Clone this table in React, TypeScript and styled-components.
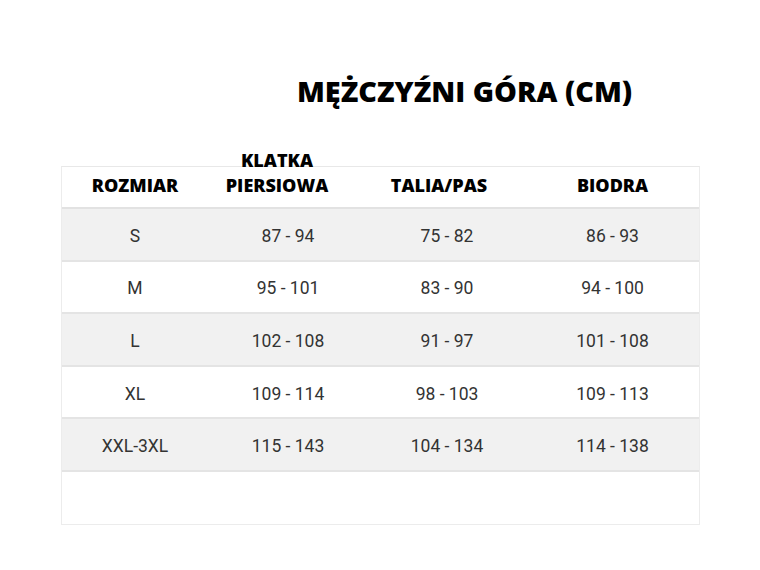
import styled, { createGlobalStyle } from "styled-components";

const GlobalStyle = createGlobalStyle`
  html, body {
    margin: 0;
    padding: 0;
    background: #ffffff;
  }
`;

const columns = [
  { label: "ROZMIAR", shift: 0 },
  { label: "KLATKA PIERSIOWA", shift: -11 },
  { label: "TALIA/PAS", shift: -8 },
  { label: "BIODRA", shift: 0 },
];

const rows = [
  ["S", "87 - 94", "75 - 82", "86 - 93"],
  ["M", "95 - 101", "83 - 90", "94 - 100"],
  ["L", "102 - 108", "91 - 97", "101 - 108"],
  ["XL", "109 - 114", "98 - 103", "109 - 113"],
  ["XXL-3XL", "115 - 143", "104 - 134", "114 - 138"],
];

export default function App() {
  return (
    <>
      <GlobalStyle />
      <Page>
        <Title>MĘŻCZYŹNI GÓRA (CM)</Title>
        <Table>
          <HeadRow>
            {columns.map((c) => (
              <HeadCell key={c.label} $shift={c.shift}>
                <HeadText>{c.label}</HeadText>
              </HeadCell>
            ))}
          </HeadRow>
          {rows.map((r, i) => (
            <Row key={r[0]} $shaded={i % 2 === 0}>
              {r.map((v, j) => (
                <Cell key={j}>{v}</Cell>
              ))}
            </Row>
          ))}
          <Row $shaded={false} />
        </Table>
      </Page>
    </>
  );
}

const Page = styled.div`
  width: 760px;
  height: 570px;
  padding-top: 71px;
  box-sizing: border-box;
`;

const Title = styled.h1`
  margin: 0 0 0 297px;
  font-family: "Open Sans", sans-serif;
  font-weight: 800;
  font-size: 28.8px;
  line-height: 40px;
  color: #000;
`;

const grid = `
  display: grid;
  grid-template-columns: 146px 160px 158px 1fr;
`;

const Table = styled.div`
  margin: 55px 0 0 61px;
  width: 639px;
  border: 1px solid #ececec;
  border-top-color: #e8e8e8;
  box-sizing: border-box;
`;

const HeadRow = styled.div`
  ${grid}
  grid-template-rows: 40px;
  height: 40px;
  background: #fff;
  border-bottom: 2px solid #e2e2e2;
`;

const HeadCell = styled.div<{ $shift: number }>`
  display: flex;
  align-items: flex-end;
  justify-content: center;
  min-height: 0;
  padding-bottom: 9px;
  box-sizing: border-box;
  transform: translateX(${(p) => p.$shift}px);
`;

const HeadText = styled.div`
  flex-shrink: 0;
  font-family: "Open Sans", sans-serif;
  font-weight: 800;
  font-size: 18px;
  line-height: 25px;
  color: #000;
  text-align: center;
  width: 116px;
`;

const Row = styled.div<{ $shaded: boolean }>`
  ${grid}
  height: 50.6px;
  background: ${(p) => (p.$shaded ? "#f1f1f1" : "#fff")};
  border-bottom: 2px solid #e4e4e4;
  &:last-child {
    border-bottom: none;
    height: 52px;
  }
`;

const Cell = styled.div`
  display: flex;
  align-items: center;
  justify-content: center;
  padding-top: 3px;
  font-family: Roboto, sans-serif;
  font-size: 17.5px;
  color: #333;
`;
